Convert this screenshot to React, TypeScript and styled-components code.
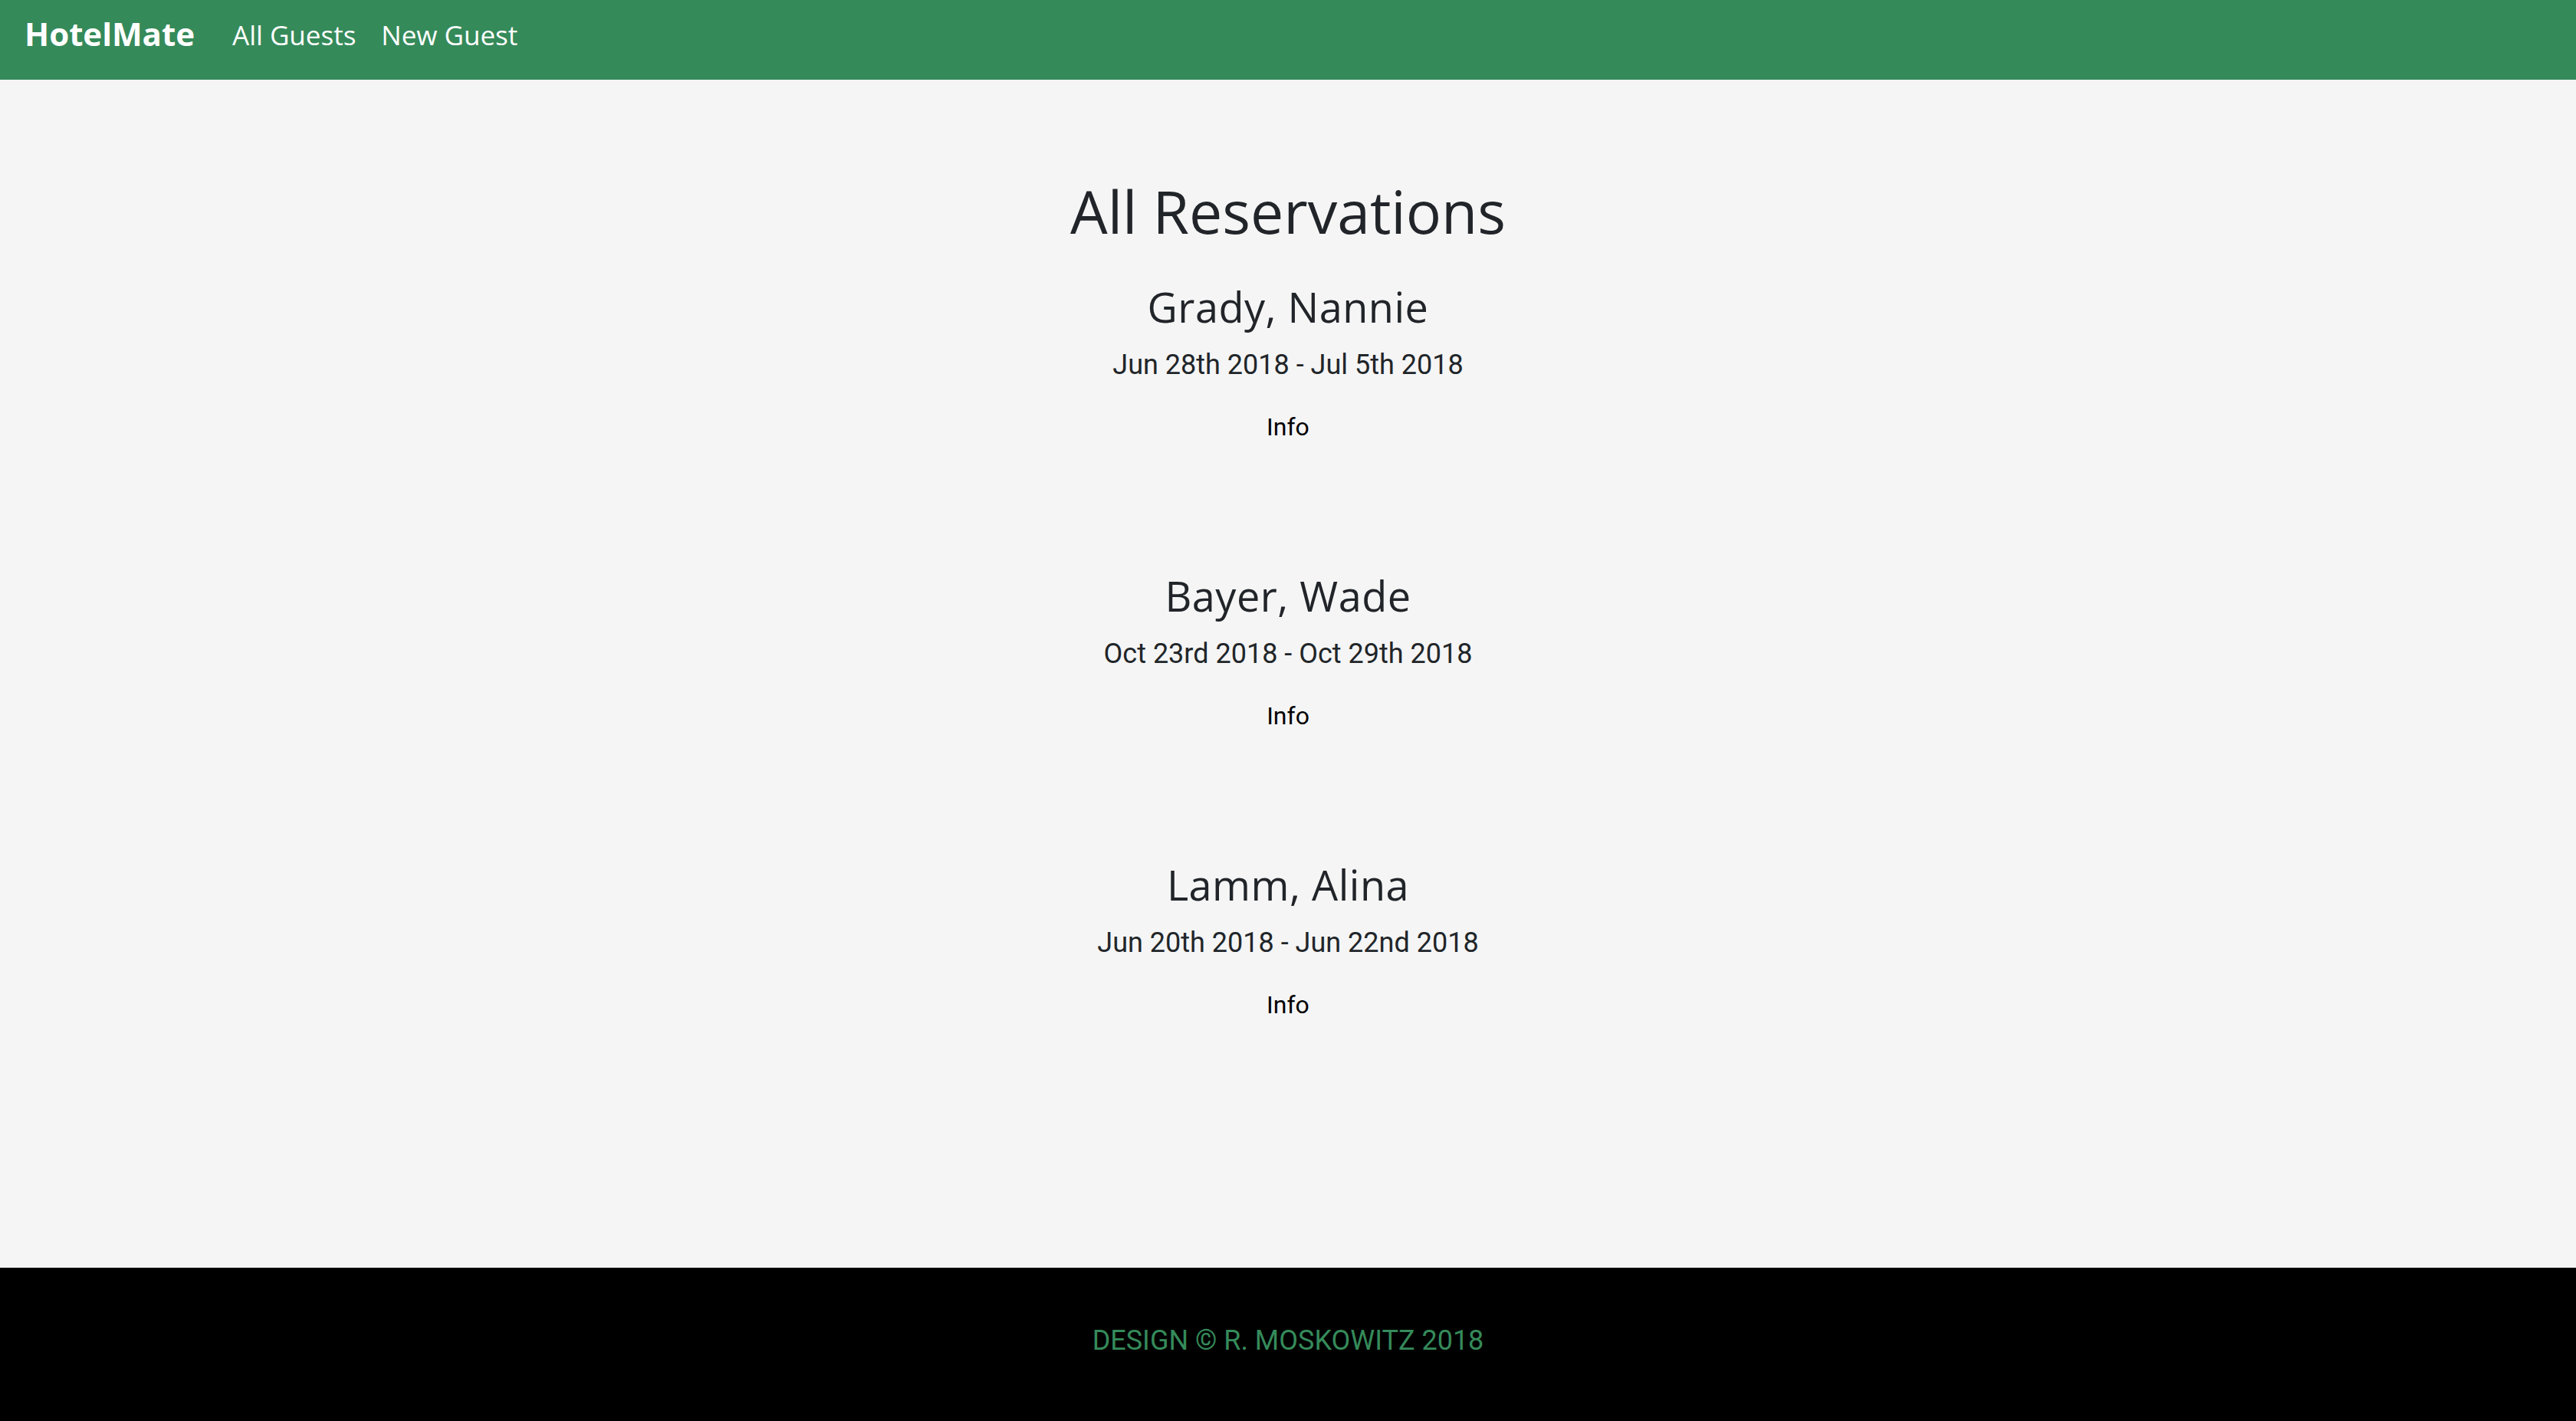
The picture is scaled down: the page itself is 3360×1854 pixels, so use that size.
import React from "react";
import styled, { createGlobalStyle } from "styled-components";

const GlobalStyle = createGlobalStyle`
  html, body { margin: 0; padding: 0; }
  body {
    background: #f5f5f5;
    font-family: Roboto, "Liberation Sans", sans-serif;
    color: #212529;
  }
  * { box-sizing: border-box; }
`;

const Page = styled.div`
  display: flex;
  flex-direction: column;
  min-height: 100vh;
`;

const NavBar = styled.nav`
  height: 104px;
  background: #358a5a;
  display: flex;
  align-items: center;
  padding: 0 32px;
  flex-shrink: 0;
`;

const Brand = styled.a`
  font-family: "Open Sans", "DejaVu Sans", sans-serif;
  font-weight: 700;
  font-size: 42px;
  color: #ffffff;
  text-decoration: none;
  margin-right: 49px;
  line-height: 1;
  position: relative;
  top: -8px;
`;

const NavLinks = styled.div`
  display: flex;
  gap: 33px;
`;

const NavLink = styled.a`
  font-family: "Open Sans", "DejaVu Sans", sans-serif;
  font-weight: 400;
  font-size: 35px;
  color: #ffffff;
  text-decoration: none;
  line-height: 1;
  position: relative;
  top: -7px;
`;

const Main = styled.main`
  flex: 1;
  display: flex;
  flex-direction: column;
  align-items: center;
  padding-top: 122px;
`;

const Title = styled.h1`
  margin: 0 0 44px 0;
  font-family: "Open Sans", "DejaVu Sans", sans-serif;
  font-weight: 400;
  font-size: 77px;
  line-height: 100px;
  height: 100px;
  color: #212529;
`;

const Reservation = styled.section`
  display: flex;
  flex-direction: column;
  align-items: center;
  margin-bottom: 170px;
`;

const GuestName = styled.h4`
  margin: 0 0 24px 0;
  font-family: "Open Sans", "DejaVu Sans", sans-serif;
  font-weight: 400;
  font-size: 54px;
  line-height: 60px;
  height: 60px;
  letter-spacing: 0.5px;
  color: #212529;
`;

const Dates = styled.p`
  margin: 0 0 39px 0;
  font-family: Roboto, "Liberation Sans", sans-serif;
  font-size: 36px;
  line-height: 44px;
  height: 44px;
  color: #212529;
`;

const InfoLink = styled.a`
  font-family: Roboto, "Liberation Sans", sans-serif;
  font-size: 32px;
  line-height: 40px;
  height: 40px;
  color: #000000;
  text-decoration: none;
`;

const Footer = styled.footer`
  height: 200px;
  flex-shrink: 0;
  background: #000000;
  display: flex;
  justify-content: center;
  padding-top: 70px;
`;

const FooterText = styled.p`
  margin: 0;
  font-family: Roboto, "Liberation Sans", sans-serif;
  font-size: 36px;
  line-height: 50px;
  height: 50px;
  text-transform: uppercase;
  color: #358a5a;
`;

const reservations = [
  { name: "Grady, Nannie", dates: "Jun 28th 2018 - Jul 5th 2018" },
  { name: "Bayer, Wade", dates: "Oct 23rd 2018 - Oct 29th 2018" },
  { name: "Lamm, Alina", dates: "Jun 20th 2018 - Jun 22nd 2018" },
];

export default function App() {
  return (
    <Page>
      <GlobalStyle />
      <NavBar>
        <Brand href="#">HotelMate</Brand>
        <NavLinks>
          <NavLink href="#">All Guests</NavLink>
          <NavLink href="#">New Guest</NavLink>
        </NavLinks>
      </NavBar>
      <Main>
        <Title>All Reservations</Title>
        {reservations.map((r) => (
          <Reservation key={r.name}>
            <GuestName>{r.name}</GuestName>
            <Dates>{r.dates}</Dates>
            <InfoLink href="#">Info</InfoLink>
          </Reservation>
        ))}
      </Main>
      <Footer>
        <FooterText>Design © R. Moskowitz 2018</FooterText>
      </Footer>
    </Page>
  );
}
